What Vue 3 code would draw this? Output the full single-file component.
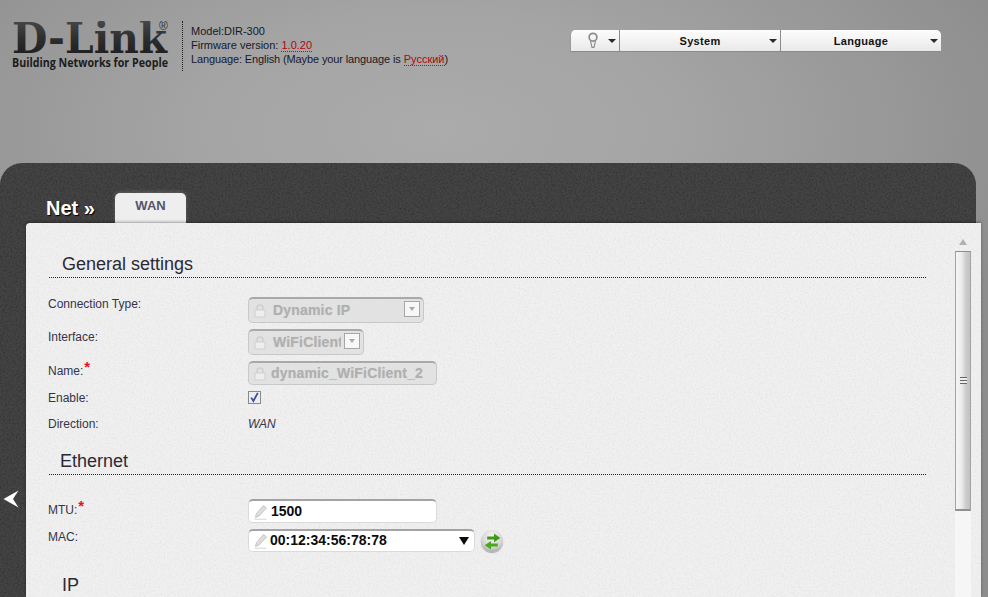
<script setup>
const menus = [
  { label: 'System', cls: 'wide' },
  { label: 'Language', cls: 'wide' },
]
</script>

<template>
  <div class="page">
    <svg class="defs" width="0" height="0">
      <defs>
        <filter id="grain" x="0" y="0" width="100%" height="100%">
          <feTurbulence type="fractalNoise" baseFrequency="0.55" numOctaves="2" seed="4" />
          <feColorMatrix type="matrix" values="0 0 0 0 0  0 0 0 0 0  0 0 0 0 0  1.6 0 0 0 -0.62" />
        </filter>
      </defs>
    </svg>
    <header class="top">
      <div class="logo">
        <svg width="160" height="50" viewBox="0 0 160 50">
          <defs>
            <linearGradient id="lg" x1="0" y1="0" x2="0" y2="1">
              <stop offset="0" stop-color="#505050" />
              <stop offset="0.5" stop-color="#2e2e2e" />
              <stop offset="1" stop-color="#171717" />
            </linearGradient>
          </defs>
          <text x="0" y="32" class="brand" textLength="155" lengthAdjust="spacingAndGlyphs" fill="url(#lg)">D-Link</text>
          <text x="147" y="9" class="reg">®</text>
          <text x="0" y="46" class="tag" textLength="156" lengthAdjust="spacingAndGlyphs">Building Networks for People</text>
        </svg>
      </div>
      <div class="info">
        <div>Model:DIR-300</div>
        <div>Firmware version: <span class="link">1.0.20</span></div>
        <div><span class="squeeze">Language: English (Maybe your language is </span><span class="link">Русский</span>)</div>
      </div>
      <nav class="menu">
        <div class="seg bulb">
          <svg width="12" height="17" viewBox="0 0 12 17" class="bulb-ic">
            <path d="M3.4 8.6 5 15.4h2L8.6 8.6" fill="#ededed" stroke="#8c8c8c" stroke-width="1.1" />
            <circle cx="6" cy="5.2" r="3.9" fill="#f4f4f4" stroke="#8c8c8c" stroke-width="1.7" />
          </svg>
          <i class="caret"></i>
        </div>
        <div v-for="m in menus" :key="m.label" class="seg" :class="m.cls">
          <span class="seg-label">{{ m.label }}</span>
          <i class="caret"></i>
        </div>
      </nav>
    </header>

    <main class="panel">
      <svg class="grain dark-grain" width="976" height="434"><rect width="976" height="434" filter="url(#grain)" /></svg>
      <div class="crumbs">
        <div class="title">Net »</div>
        <div class="tab">WAN</div>
      </div>
      <div class="sheet-wrap">
        <svg class="back" width="16" height="18" viewBox="0 0 16 18">
          <path d="M0.5 9 15.5 0.5 10 9 15.5 17.5z" fill="#fff" />
        </svg>
        <section class="sheet">
          <svg class="grain light-grain" width="955" height="374"><rect width="955" height="374" filter="url(#grain)" /></svg>
          <div class="form">
            <h2 class="head first"><span class="pad-14">General settings</span></h2>

            <div class="row r1">
              <label class="lbl up1">Connection Type:</label>
              <div class="field off w176 h26">
                <svg class="lock" width="12" height="14" viewBox="0 0 12 14"><path d="M3 6V4a3 3 0 0 1 6 0v2" fill="none" stroke="#cfcfcf" stroke-width="1.4"/><rect x="1" y="6" width="10" height="7" fill="#eeeeee" stroke="#cfcfcf"/></svg>
                <span class="val gray">Dynamic IP</span>
                <span class="dd"><i class="dd-arrow"></i></span>
              </div>
            </div>

            <div class="row">
              <label class="lbl">Interface:</label>
              <div class="field off w116 h26">
                <svg class="lock" width="12" height="14" viewBox="0 0 12 14"><path d="M3 6V4a3 3 0 0 1 6 0v2" fill="none" stroke="#cfcfcf" stroke-width="1.4"/><rect x="1" y="6" width="10" height="7" fill="#eeeeee" stroke="#cfcfcf"/></svg>
                <span class="val gray clip">WiFiClient</span>
                <span class="dd"><i class="dd-arrow"></i></span>
              </div>
            </div>

            <div class="row">
              <label class="lbl dn2">Name:<sup class="req">*</sup></label>
              <div class="field off w189 h24">
                <svg class="lock" width="12" height="14" viewBox="0 0 12 14"><path d="M3 6V4a3 3 0 0 1 6 0v2" fill="none" stroke="#cfcfcf" stroke-width="1.4"/><rect x="1" y="6" width="10" height="7" fill="#eeeeee" stroke="#cfcfcf"/></svg>
                <span class="val gray tight">dynamic_WiFiClient_2</span>
              </div>
            </div>

            <div class="row">
              <label class="lbl up1">Enable:</label>
              <span class="check">
                <svg width="11" height="11" viewBox="0 0 11 11"><path d="M2.2 5.6 4.4 9 8.8 0.8" fill="none" stroke="#3b4a9c" stroke-width="1.7"/></svg>
              </span>
            </div>

            <div class="row r5">
              <label class="lbl">Direction:</label>
              <em class="dir">WAN</em>
            </div>

            <h2 class="head second"><span class="pad-12">Ethernet</span></h2>

            <div class="row r6">
              <label class="lbl dn3">MTU:<sup class="req">*</sup></label>
              <div class="field on w189 h24">
                <svg class="pen" width="14" height="16" viewBox="0 0 14 16"><path d="M9.5 1.5 12.5 4 5 12 1.5 13.5 2.5 9.5z" fill="#dedede" stroke="#c4c4c4"/><path d="M0.5 15.2h12" stroke="#d4d4d4"/></svg>
                <span class="val dark">1500</span>
              </div>
            </div>

            <div class="row r7">
              <label class="lbl">MAC:</label>
              <div class="field on w227 h23">
                <svg class="pen" width="14" height="16" viewBox="0 0 14 16"><path d="M9.5 1.5 12.5 4 5 12 1.5 13.5 2.5 9.5z" fill="#dedede" stroke="#c4c4c4"/><path d="M0.5 15.2h12" stroke="#d4d4d4"/></svg>
                <span class="val dark mac">00:12:34:56:78:78</span>
                <i class="mac-arrow"></i>
              </div>
              <span class="refresh">
                <svg width="17" height="17" viewBox="0 0 16 16">
                  <path d="M3 3.2h6.4V0.4L15.4 4.7l-6 4.1V6H3z" fill="#3f9a18"/>
                  <path d="M13 9.8H6.6V7.6L0.6 11.5l6 4.1V12.6H13z" fill="#4aa81f"/>
                </svg>
              </span>
            </div>

            <h2 class="head third"><span class="pad-14">IP</span></h2>
          </div>

          <aside class="scroll">
            <i class="up"></i>
            <div class="thumb">
              <span class="grip"></span>
            </div>
            <div class="track"></div>
          </aside>
        </section>
      </div>
    </main>
  </div>
</template>

<style>
html, body { margin: 0; padding: 0; height: 100%; overflow: hidden; background: #8e8e8e; }
</style>

<style scoped>
.page {
  width: 988px;
  height: 597px;
  overflow: hidden;
  display: flex;
  flex-direction: column;
  font-family: "Liberation Sans", Arial, sans-serif;
  background: radial-gradient(ellipse 620px 300px at 440px 130px, #ababab 0%, #a4a4a4 40%, #979797 75%, #8d8d8d 100%);
}
.defs { position: absolute; }
.top {
  height: 163px;
  flex: none;
  display: flex;
  align-items: flex-start;
  box-sizing: border-box;
  padding: 21px 0 0 12px;
}
.logo { width: 170px; height: 50px; flex: none; border-right: 1px dotted #222; margin-right: 8px; }
.logo svg { display: block; }
.brand { font-family: "DejaVu Serif", serif; font-weight: 700; font-size: 42px; }
.reg { font-family: "Liberation Sans", sans-serif; font-size: 12px; fill: #333; }
.tag { font-family: "Open Sans", sans-serif; font-weight: 700; font-size: 13px; fill: #1c1c1c; }
.info { width: 372px; flex: none; font-size: 11px; line-height: 14px; color: #18182a; padding-top: 3px; white-space: nowrap; }
.squeeze { letter-spacing: -0.12px; }
.link { color: #b3050f; border-bottom: 1px dotted #c4060f; }
.menu {
  flex: none;
  display: flex;
  width: 371px;
  height: 22px;
  margin: 9px 0 0 7px;
  box-sizing: border-box;
  border-bottom: 1px solid #8a8a8a;
  border-left: 1px solid #9b9b9b;
  background: linear-gradient(#fdfdfd, #e9e9e9);
  border-radius: 5px 5px 0 0;
  overflow: hidden;
}
.seg { position: relative; display: flex; align-items: center; justify-content: center; box-sizing: border-box; height: 21px; }
.seg + .seg { border-left: 1px solid #8b8b8b; }
.bulb { width: 48px; }
.bulb-ic { position: absolute; left: 16px; top: 2px; }
.wide { width: 161px; }
.seg-label { font-size: 11px; font-weight: 700; color: #111; letter-spacing: 0.3px; }
.caret { position: absolute; right: 3px; top: 9px; width: 0; height: 0; border: 4px solid transparent; border-top: 4px solid #2a2a2a; border-bottom: 0; }

.panel {
  flex: 1;
  width: 976px;
  background: #444444;
  border-radius: 22px 22px 0 0;
  display: flex;
  flex-direction: column;
  box-sizing: border-box;
  position: relative;
  overflow: visible;
}
.grain { position: absolute; left: 0; top: 0; pointer-events: none; }
.dark-grain { opacity: 0.3; border-radius: 22px 22px 0 0; }
.light-grain { opacity: 0.05; }
.crumbs { height: 60px; flex: none; display: flex; align-items: flex-end; padding-left: 46px; position: relative; }
.title { color: #fff; font-weight: 700; font-size: 20px; line-height: 24px; width: 69px; padding-bottom: 3px; text-shadow: 1px 1px 1px #000; }
.tab {
  width: 71px;
  height: 30px;
  box-sizing: border-box;
  background: #eeeeee;
  border-radius: 5px 5px 0 0;
  text-align: center;
  font-size: 13px;
  font-weight: 700;
  line-height: 26px;
  color: #55556a;
  box-shadow: 0 -1px 4px rgba(255, 255, 255, 0.18);
}
.sheet-wrap { flex: 1; display: flex; position: relative; padding-left: 26px; min-height: 0; }
.back { position: absolute; left: 3px; top: 267px; }
.sheet {
  flex: none;
  width: 955px;
  height: 374px;
  background: #f0f0f0;
  border-radius: 4px 0 0 0;
  display: flex;
  overflow: hidden;
  position: relative;
  box-shadow: 0 -1px 3px rgba(0, 0, 0, 0.35);
}
.form { width: 900px; flex: none; padding: 27px 0 0 22px; box-sizing: border-box; color: #2f2f3f; position: relative; }
.head {
  margin: 0;
  height: 28px;
  box-sizing: border-box;
  width: 877px;
  margin-left: 1px;
  font-weight: 400;
  font-size: 18px;
  line-height: 29px;
  color: #2a2a35;
  border-bottom: 1px dotted #222;
  white-space: nowrap;
}
.pad-14 { padding-left: 13px; }
.pad-12 { padding-left: 11px; }
.second { margin-top: 15px; }
.third { margin-top: 19px; border-bottom: 0; }
.row { display: flex; align-items: flex-start; margin-top: 6px; position: relative; }
.r1 { margin-top: 19px; }
.r5 { margin-top: 9px; }
.r6 { margin-top: 24px; }
.lbl { width: 200px; flex: none; font-size: 12px; line-height: 16px; color: #34344a; }
.up1 { margin-top: -1px; margin-bottom: 1px; }
.dn2 { margin-top: 2px; }
.dn3 { margin-top: 3px; }
.req { color: #e8111c; font-size: 15px; font-weight: 700; line-height: 0; vertical-align: 3px; margin-left: 1px; }
.field {
  display: flex;
  align-items: center;
  position: relative;
  box-sizing: border-box;
  border-radius: 5px;
  overflow: hidden;
}
.off { background: #e2e2e2; border: 1px solid #c8c8c8; border-top: 2px solid #a9a9a9; }
.on { background: #fff; border: 1px solid #dadada; border-top: 2px solid #a3a3a3; }
.w176 { width: 176px; }
.w116 { width: 116px; }
.w189 { width: 189px; }
.w227 { width: 227px; }
.h26 { height: 26px; }
.h24 { height: 24px; }
.h23 { height: 23px; }
.lock { flex: none; margin-left: 5px; }
.pen { flex: none; margin-left: 5px; }
.val { font-size: 14px; font-weight: 700; white-space: nowrap; padding-bottom: 2px; letter-spacing: 0.18px; }
.gray { color: #b0b0b0; margin-left: 7px; text-shadow: 0 0 1px #c8c8c8; }
.tight { margin-left: 5px; }
.clip { width: 68px; overflow: hidden; }
.dark { color: #0c0c0c; margin-left: 3px; letter-spacing: 0; }
.mac { margin-left: 2px; }
.dd {
  position: absolute;
  right: 3px;
  top: 2px;
  width: 16px;
  height: 16px;
  box-sizing: border-box;
  background: #f7f7f7;
  border: 1px solid #a6a6a6;
  display: flex;
  align-items: center;
  justify-content: center;
}
.dd-arrow { width: 0; height: 0; border: 3.5px solid transparent; border-top: 4px solid #a9a9a9; border-bottom: 0; }
.mac-arrow { position: absolute; right: 5px; top: 6px; width: 0; height: 0; border: 5.5px solid transparent; border-top: 8px solid #0c0c0c; border-bottom: 0; }
.check {
  width: 13px;
  height: 13px;
  box-sizing: border-box;
  background: #ececf2;
  border: 1px solid #8a8a8a;
  display: block;
}
.check svg { display: block; }
.dir { font-size: 12px; line-height: 16px; color: #34344a; }
.refresh {
  width: 22px;
  height: 22px;
  margin: 1px 0 0 6px;
  border-radius: 50%;
  background: radial-gradient(circle at 50% 30%, #f8f8f8, #d2d2d2 60%, #868686);
  box-shadow: 0 1px 1px rgba(0, 0, 0, 0.3);
  display: flex;
  align-items: center;
  justify-content: center;
}
.scroll { flex: none; width: 16px; margin-left: 29px; display: flex; flex-direction: column; align-items: stretch; position: relative; }
.up { display: block; width: 0; height: 0; margin: 16px auto 0; border: 4px solid transparent; border-bottom: 6px solid #b0b0b0; border-top: 0; }
.thumb {
  margin-top: 6px;
  height: 260px;
  box-sizing: border-box;
  border: 1px solid #a2a2a2;
  border-top-color: #8f8f8f;
  border-bottom: 2px solid #909090;
  background: linear-gradient(90deg, #f6f6f6 0%, #ebebeb 40%, #cdcdcd 70%, #c2c2c2 100%);
  display: flex;
  align-items: center;
  justify-content: center;
  flex: none;
}
.grip { display: block; width: 7px; height: 7px; background: repeating-linear-gradient(#666 0 1px, #eee 1px 3px); }
.track { flex: 1; background: #f6f6f6; }
</style>
